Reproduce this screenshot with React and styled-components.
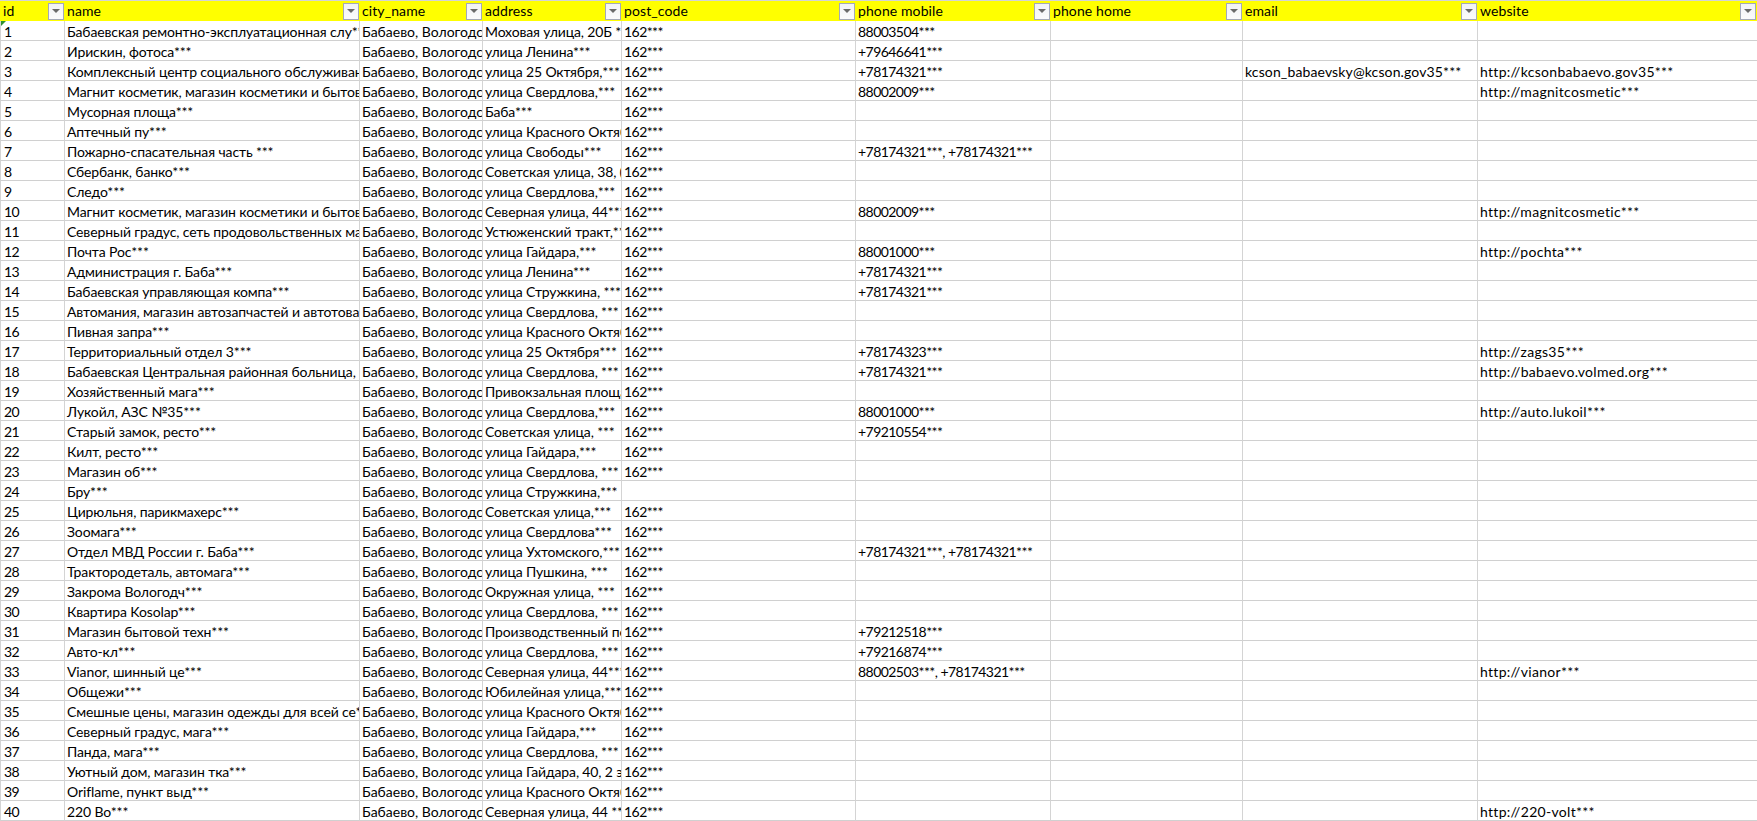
import React from "react";
import styled, { createGlobalStyle } from "styled-components";

const GlobalStyle = createGlobalStyle`
  html, body { margin: 0; padding: 0; background: #fff; overflow: hidden; }
`;

// spacing evens out the width difference between Lato and the sheet's font
const COLUMNS = [
  { key: "id", title: "id", width: 65, spacing: -0.55 },
  { key: "name", title: "name", width: 295, spacing: -0.12 },
  { key: "city_name", title: "city_name", width: 123, spacing: 0 },
  { key: "address", title: "address", width: 139, spacing: -0.14 },
  { key: "post_code", title: "post_code", width: 234, spacing: -0.55 },
  { key: "phone_mobile", title: "phone mobile", width: 195, spacing: -0.55 },
  { key: "phone_home", title: "phone home", width: 192, spacing: 0 },
  { key: "email", title: "email", width: 235, spacing: 0.13 },
  { key: "website", title: "website", width: 280, spacing: 0.3 },
];

const CITY = "Бабаево, Вологодск";
const KRASNY = "улица Красного Октяб";
const SVERD = "улица Свердлова, ***";
const SVERD2 = "улица Свердлова,***";
const MAGNIT = "Магнит косметик, магазин косметики и бытовой";
const CITY_PHONE = "+78174321***";
const DOUBLE_PHONE = "+78174321***, +78174321***";

// name, address, mobile, website
const DATA = [
  ["Бабаевская ремонтно-эксплуатационная слу***", "Моховая улица, 20Б ***", "88003504***"],
  ["Ирискин, фотоса***", "улица Ленина***", "+79646641***"],
  ["Комплексный центр социального обслуживания", "улица 25 Октября,***", CITY_PHONE, "http://kcsonbabaevo.gov35***"],
  [MAGNIT, SVERD2, "88002009***", "http://magnitcosmetic***"],
  ["Мусорная площа***", "Баба***"],
  ["Аптечный пу***", KRASNY],
  ["Пожарно-спасательная часть ***", "улица Свободы***", DOUBLE_PHONE],
  ["Сбербанк, банко***", "Советская улица, 38, ("],
  ["Следо***", SVERD2],
  [MAGNIT, "Северная улица, 44***", "88002009***", "http://magnitcosmetic***"],
  ["Северный градус, сеть продовольственных магазинов", "Устюженский тракт,***"],
  ["Почта Рос***", "улица Гайдара,***", "88001000***", "http://pochta***"],
  ["Администрация г. Баба***", "улица Ленина***", CITY_PHONE],
  ["Бабаевская управляющая компа***", "улица Стружкина, ***", CITY_PHONE],
  ["Автомания, магазин автозапчастей и автотоваров", SVERD],
  ["Пивная запра***", KRASNY],
  ["Территориальный отдел 3***", "улица 25 Октября***", "+78174323***", "http://zags35***"],
  ["Бабаевская Центральная районная больница,", SVERD, CITY_PHONE, "http://babaevo.volmed.org***"],
  ["Хозяйственный мага***", "Привокзальная площадь"],
  ["Лукойл, АЗС №35***", SVERD2, "88001000***", "http://auto.lukoil***"],
  ["Старый замок, ресто***", "Советская улица, ***", "+79210554***"],
  ["Килт, ресто***", "улица Гайдара,***"],
  ["Магазин об***", SVERD],
  ["Бру***", "улица Стружкина,***"],
  ["Цирюльня, парикмахерс***", "Советская улица,***"],
  ["Зоомага***", "улица Свердлова***"],
  ["Отдел МВД России г. Баба***", "улица Ухтомского,***", DOUBLE_PHONE],
  ["Трактородеталь, автомага***", "улица Пушкина, ***"],
  ["Закрома Вологодч***", "Окружная улица, ***"],
  ["Квартира Kosolap***", SVERD],
  ["Магазин бытовой техн***", "Производственный пер", "+79212518***"],
  ["Авто-кл***", SVERD, "+79216874***"],
  ["Vianor, шинный це***", "Северная улица, 44***", "88002503***, +78174321***", "http://vianor***"],
  ["Общежи***", "Юбилейная улица,***"],
  ["Смешные цены, магазин одежды для всей се***", KRASNY],
  ["Северный градус, мага***", "улица Гайдара,***"],
  ["Панда, мага***", SVERD],
  ["Уютный дом, магазин тка***", "улица Гайдара, 40, 2 эт"],
  ["Oriflame, пункт выд***", KRASNY],
  ["220 Во***", "Северная улица, 44 ***", undefined, "http://220-volt***"],
];

const ROWS = DATA.map(([name, address, mobile, website], i) => ({
  id: i + 1,
  name,
  city_name: CITY,
  address,
  post_code: i === 23 ? "" : "162***",
  phone_mobile: mobile,
  phone_home: "",
  email: i === 2 ? "kcson_babaevsky@kcson.gov35***" : "",
  website,
}));

const Sheet = styled.table`
  table-layout: fixed;
  width: 1757px;
  border-collapse: separate;
  border-spacing: 0;
  font-family: "Lato", "Noto Sans", sans-serif;
  font-size: 14px;
  color: #000;
`;

const HeadCell = styled.th`
  height: 20px;
  padding: 0;
  background: #ffff00;
  border-top: 1px solid #d4d4d4;
  border-right: ${(p) => (p.$last ? "1px solid #6fc7a0" : "0")};
  font-weight: 400;
  text-align: left;
`;

const HeadInner = styled.div`
  display: flex;
  align-items: center;
  justify-content: space-between;
  height: 20px;
  padding: 0 1px 0 ${(p) => (p.$first ? 3 : 2)}px;
  box-sizing: border-box;
`;

const HeadTitle = styled.span`
  line-height: 20px;
  letter-spacing: 0.1px;
`;

const FilterButton = styled.button`
  flex: none;
  display: flex;
  align-items: center;
  justify-content: center;
  width: 16px;
  height: 17px;
  padding: 0;
  border: 1px solid #a3a9b8;
  background: linear-gradient(#f1f2f5, #fbfbfc);
`;

const FilterArrow = styled.span`
  width: 0;
  height: 0;
  border-left: 4px solid transparent;
  border-right: 4px solid transparent;
  border-top: 4px solid #6a6a6a;
`;

const Row = styled.tr`
  height: 20px;
`;

const Cell = styled.td`
  position: relative;
  height: 17px;
  padding: 2px 0 0 ${(p) => (p.$first ? 3 : 2)}px;
  border-right: 1px solid ${(p) => (p.$last ? "transparent" : "#d4d4d4")};
  border-bottom: 1px solid #d0d0d0;
  border-left: ${(p) => (p.$first ? "1px solid #d4d4d4" : "0")};
  line-height: 17px;
  white-space: nowrap;
  overflow: hidden;
  letter-spacing: ${(p) => p.$spacing}px;
`;

const ErrorMark = styled.span`
  position: absolute;
  top: 0;
  left: 0;
  width: 0;
  height: 0;
  border-top: 5px solid #2f8f2f;
  border-right: 5px solid transparent;
`;

export default function App() {
  return (
    <>
      <GlobalStyle />
      <Sheet>
        <colgroup>
          {COLUMNS.map((col) => (
            <col key={col.key} style={{ width: col.width }} />
          ))}
        </colgroup>
        <thead>
          <tr>
            {COLUMNS.map((col, c) => (
              <HeadCell key={col.key} $last={c === COLUMNS.length - 1}>
                <HeadInner $first={c === 0}>
                  <HeadTitle>{col.title}</HeadTitle>
                  <FilterButton type="button" aria-label={`Фильтр ${col.title}`}>
                    <FilterArrow />
                  </FilterButton>
                </HeadInner>
              </HeadCell>
            ))}
          </tr>
        </thead>
        <tbody>
          {ROWS.map((row) => (
            <Row key={row.id}>
              {COLUMNS.map((col, c) => (
                <Cell
                  key={col.key}
                  $first={c === 0}
                  $last={c === COLUMNS.length - 1}
                  $spacing={col.spacing}
                >
                  {c === 0 && row.id === 1 && <ErrorMark />}
                  {row[col.key]}
                </Cell>
              ))}
            </Row>
          ))}
        </tbody>
      </Sheet>
    </>
  );
}
